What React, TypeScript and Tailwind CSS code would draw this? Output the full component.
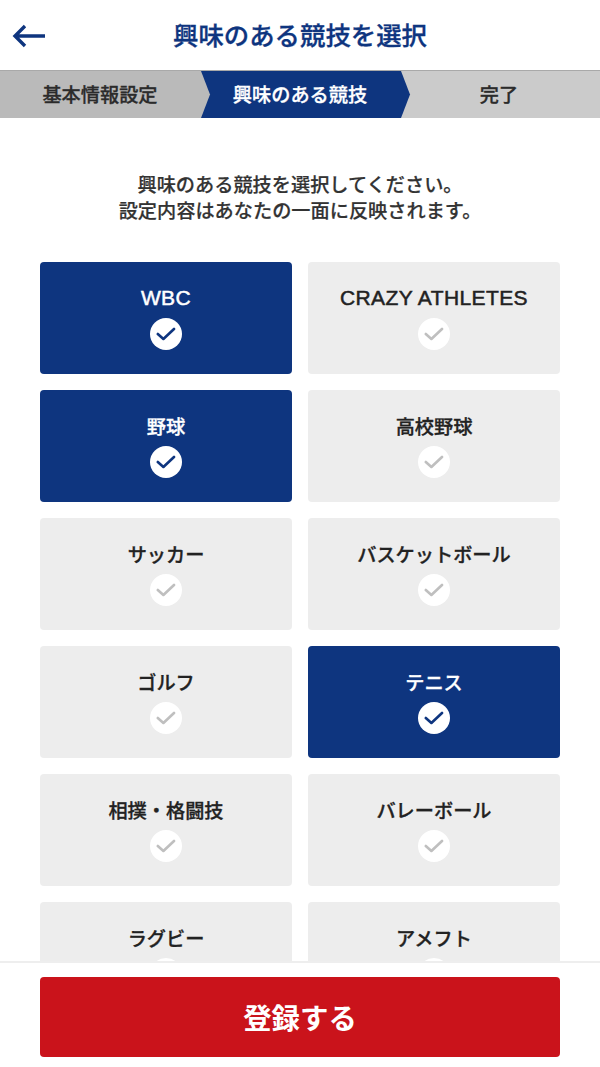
import React, { useState } from 'react';

type Sport = { name: string; latin?: boolean };

const SPORTS: Sport[] = [
    { name: 'WBC', latin: true },
    { name: 'CRAZY ATHLETES', latin: true },
    { name: '野球' },
    { name: '高校野球' },
    { name: 'サッカー' },
    { name: 'バスケットボール' },
    { name: 'ゴルフ' },
    { name: 'テニス' },
    { name: '相撲・格闘技' },
    { name: 'バレーボール' },
    { name: 'ラグビー' },
    { name: 'アメフト' },
];

const BackArrow: React.FC = () => (
    <svg width="34" height="24" viewBox="0 0 34 24" fill="none" stroke="#0e357f" strokeWidth="3.4">
        <path d="M33 12H3M13 2L3 12l10 10" />
    </svg>
);

const CheckMark: React.FC<{ selected: boolean }> = ({ selected }) => (
    <span className={`flex h-8 w-8 items-center justify-center rounded-full bg-white ${selected ? 'text-[#0e357f]' : 'text-[#bfbfbf]'}`}>
        <svg width="20" height="14" viewBox="0 0 20 14" fill="none" stroke="currentColor" strokeWidth="2.6" strokeLinecap="round" strokeLinejoin="round">
            <path d="M1.8 7L7.4 12L18 2" />
        </svg>
    </span>
);

const Steps: React.FC = () => (
    <div className="relative grid h-12 grid-cols-3 border-t border-[#a9a9a9] bg-[#cbcbcb] text-[19.2px] font-medium leading-[47px] text-[#2b2b2b] [-webkit-text-stroke:0.3px_currentColor]">
        <svg className="absolute left-0 top-0" width="600" height="47" viewBox="0 0 600 47">
            <path d="M201 0H401L410 23.5L401 47H201Z" fill="#0e357f" />
            <path d="M0 0H201L210 23.5L201 47H0Z" fill="#bababa" />
        </svg>
        <span className="relative text-center">基本情報設定</span>
        <span className="relative text-center text-white">興味のある競技</span>
        <span className="relative pr-0.5 text-center">完了</span>
    </div>
);

const SportCard: React.FC<{ sport: Sport; selected: boolean; onClick: () => void }> = ({ sport, selected, onClick }) => (
    <button
        onClick={onClick}
        className={`flex h-28 flex-col items-center rounded pt-[22px] ${selected ? 'bg-[#0e357f] text-white' : 'bg-[#ededed] text-[#222]'}`}
    >
        <span
            className={`mb-1.5 h-7 whitespace-nowrap leading-7 ${
                sport.latin
                    ? "font-['Liberation_Sans'] text-[21px] tracking-[0.4px] [-webkit-text-stroke:0.5px_currentColor]"
                    : 'text-[19.2px] font-medium [-webkit-text-stroke:0.3px_currentColor]'
            }`}
        >
            {sport.name}
        </span>
        <CheckMark selected={selected} />
    </button>
);

export default function App() {
    const [selected, setSelected] = useState<string[]>(['WBC', '野球', 'テニス']);

    const toggle = (name: string) =>
        setSelected((prev) => (prev.includes(name) ? prev.filter((n) => n !== name) : [...prev, name]));

    return (
        <div lang="ja" className="flex h-[1067px] w-[600px] flex-col overflow-hidden bg-white font-['Noto_Sans_CJK_JP',sans-serif]">
            <header className="grid h-[70px] shrink-0 grid-cols-[60px_1fr_60px] items-center">
                <button className="pl-3 pt-0.5">
                    <BackArrow />
                </button>
                <h1 className="pb-0.5 text-center text-[25.4px] font-medium leading-[68px] text-[#0e357f] [-webkit-text-stroke:0.3px_currentColor]">
                    興味のある競技を選択
                </h1>
            </header>
            <Steps />

            <main className="min-h-0 flex-1 overflow-hidden px-10 pt-[53px]">
                <p className="text-center text-[19.2px] font-medium leading-[26px] text-[#333] [-webkit-text-stroke:0.2px_currentColor]">
                    興味のある競技を選択してください。
                    <br />
                    設定内容はあなたの一面に反映されます。
                </p>
                <div className="mt-[39px] grid grid-cols-2 gap-4">
                    {SPORTS.map((sport) => (
                        <SportCard
                            key={sport.name}
                            sport={sport}
                            selected={selected.includes(sport.name)}
                            onClick={() => toggle(sport.name)}
                        />
                    ))}
                </div>
            </main>

            <footer className="h-[106px] shrink-0 border-t-2 border-[#eee] px-10 pt-3.5">
                <button className="h-20 w-full rounded bg-[#ca131b] text-[28.4px] font-bold text-white">登録する</button>
            </footer>
        </div>
    );
}
